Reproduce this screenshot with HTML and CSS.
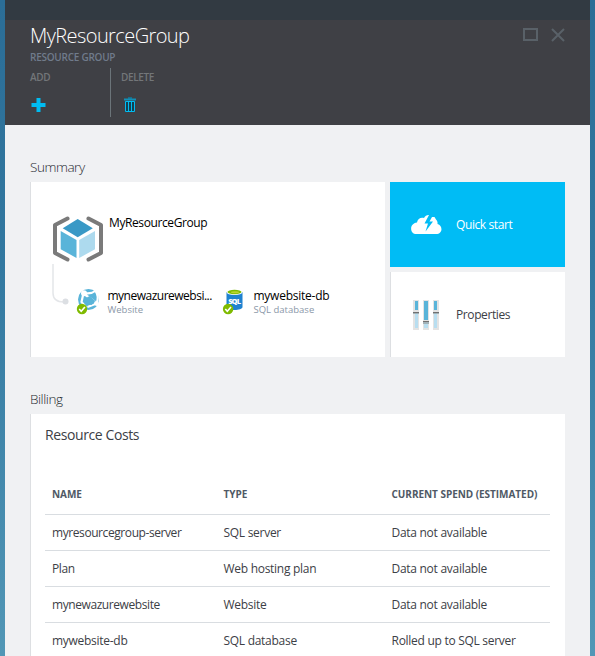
FILE: index.html
```html
<!DOCTYPE html>
<html lang="en">
<head>
<meta charset="utf-8">
<title>MyResourceGroup</title>
<link rel="stylesheet" href="styles.css">
</head>
<body>
<main class="blade">
  <header class="header">
    <div class="title-row">
      <h1>MyResourceGroup</h1>
      <svg class="window-controls" width="44" height="16" viewBox="0 0 44 16" fill="none" stroke="#596168" stroke-width="2"><path d="M2 2h13v11H2z"/><path d="M30 2l12 12M42 2L30 14"/></svg>
    </div>
    <div class="subtitle"><span>RESOURCE GROUP</span></div>
    <div class="commands">
      <div class="command add"><span>ADD</span>
        <svg width="16" height="16" viewBox="0 0 16 16"><path d="M6.500 1h4v5h5v4h-5v5h-4v-5h-5V6h5z" fill="#00bcf2"/></svg>
      </div>
      <div class="command delete"><span>DELETE</span>
        <svg width="16" height="16" viewBox="0 0 16 16"><path d="M7 0h4v2H7z" fill="#156f8d"/><path d="M3 1.500h12v2H3z" fill="#1290b6"/><path d="M4.500 4.500h9v10h-9z" fill="#12404f" stroke="#00bcf2"/><path d="M7.500 5v9M10.500 5v9" stroke="#00bcf2"/></svg>
      </div>
    </div>
  </header>
  <section class="content">
    <h2>Summary</h2>
    <div class="summary">
      <div class="tile group">
        <div class="group-head">
          <svg width="52" height="48" viewBox="52 215 52 48">
            <path d="M67.500 218.500L55 225v28l12.500 6.500M88.500 218.500L101 225v28l-12.500 6.500" fill="none" stroke="#7a7a7a" stroke-width="4" stroke-linecap="round" stroke-linejoin="round"/>
            <path d="M77.700 219l15.100 9.300-15.100 9-15-9z" fill="#3999c6"/><path d="M60.700 231l15.800 9v18l-15.800-8.800z" fill="#59b4d9"/><path d="M79.200 240l15.800-9v18.200L79.200 258z" fill="#addaee"/>
          </svg>
          <span>MyResourceGroup</span>
        </div>
        <div class="resources">
          <svg class="link" width="18" height="42" viewBox="0 0 18 42"><path d="M2 0v29q0 9 11 9" fill="none" stroke="#e4e6e9" stroke-width="1.500"/><circle cx="14.500" cy="37.500" r="3" fill="#dcdfe3"/></svg>
          <div class="resource site">
            <svg width="26" height="28" viewBox="76 288 26 28">
              <circle cx="88.500" cy="299.500" r="10.500" fill="#59b4d9"/>
              <path d="M83.500 293.500l13 9.500M83.500 293l-2 9 5 6M96.500 303.500l-9 3.500M84 293q7 1.500 12-2.500M96.500 303q3-6-1-12" stroke="#fff" fill="none" stroke-width="2.200"/>
              <path d="M84.500 299l5-3 6.500 5.500-4.500 3.500-6-1z" fill="#59b4d9"/>
              <circle cx="84" cy="293.200" r="3" fill="#fff"/><circle cx="96.500" cy="303.500" r="2.400" fill="#fff"/>
              <circle cx="82" cy="309" r="5.200" fill="#7fba00"/><path d="M79.200 309l2 2.200 3.700-4.200" fill="none" stroke="#fff" stroke-width="1.600"/>
            </svg>
            <div><b>mynewazurewebsi...</b><small>Website</small></div>
          </div>
          <div class="resource database">
            <svg width="26" height="28" viewBox="222 288 26 28">
              <path d="M226.500 292v15c0 4 16 4 16 0v-15z" fill="#1f82d0"/><ellipse cx="234.500" cy="292.200" rx="8" ry="2.800" fill="#fff"/><ellipse cx="234.500" cy="292" rx="7" ry="2.200" fill="#7fba00"/><ellipse cx="235" cy="292.200" rx="4" ry="1" fill="#b8d432"/>
              <text class="sql" x="228.200" y="304" textLength="12.800">SQL</text>
              <circle cx="228.100" cy="309" r="5.200" fill="#7fba00"/><path d="M225.300 309l2 2.200 3.700-4.200" fill="none" stroke="#fff" stroke-width="1.600"/>
            </svg>
            <div><b>mywebsite-db</b><small>SQL database</small></div>
          </div>
        </div>
      </div>
      <div class="shortcuts">
        <div class="tile action quick">
          <svg width="32" height="32" viewBox="410 208 32 32"><path d="M416.500 233c-7 0-7.500-10.500.5-11.500.5-4 4-5.500 7-4.500 1-2 3-3.200 5-3l-4.500 8.500h3.500l-2.500 8 7.500-10h-3.500l2.500-4.500h2.500l1.500 2.500c2 2 1.500 4 1.500 4.500 5.500 1.500 5.500 10-1.500 10z" fill="#fff"/></svg>
          <span>Quick start</span>
        </div>
        <div class="tile action">
          <svg width="32" height="32" viewBox="410 299 32 32"><path d="M413 300h6v30h-6zM423 300h6v30h-6zM433 300h6v30h-6z" fill="#e3e3e3"/><path d="M415 313h3v15h-3zM424 323h4v5h-4zM434 313h3v15h-3z" fill="#b8def0"/><path d="M415 301h3v9h-3zM424 301h4v19h-4zM434 301h3v9h-3z" fill="#59b4d9"/><path d="M413 313h6v1h-6zM423 322h6v2h-6zM433 313h6v1h-6z" fill="#a2b2b8"/><path d="M413 312h6v1h-6zM423 321h6v1h-6zM433 312h6v1h-6z" fill="#707070"/></svg>
          <span>Properties</span>
        </div>
      </div>
    </div>
    <h2 class="billing-title">Billing</h2>
    <div class="tile billing">
      <h3>Resource Costs</h3>
      <div class="table">
        <div class="row head"><span>NAME</span><span>TYPE</span><span>CURRENT SPEND (ESTIMATED)</span></div>
        <div class="row"><span class="name">myresourcegroup-server</span><span>SQL server</span><span>Data not available</span></div>
        <div class="row"><span class="name">Plan</span><span>Web hosting plan</span><span>Data not available</span></div>
        <div class="row"><span class="name">mynewazurewebsite</span><span>Website</span><span>Data not available</span></div>
        <div class="row"><span>mywebsite-db</span><span>SQL database</span><span>Rolled up to SQL server</span></div>
      </div>
    </div>
  </section>
</main>
</body>
</html>
```
FILE: styles.css
```css
* { box-sizing: border-box; }
body { margin: 0; height: 656px; overflow: hidden; padding: 0 5px; background: linear-gradient(#2b6d96, #3278a0 40%, #5297b6); font-family: "Open Sans", sans-serif; font-size: 12px; color: #3c4046; }
h1, h2, h3 { margin: 0; font-weight: 400; }
svg { display: block; flex: none; }
.blade { height: 656px; overflow: hidden; background: #f0f1f3; }
.header { height: 125px; padding: 0 24px 0 25px; background: #3f4045; border-top: 20px solid #323a42; }
.title-row { display: flex; justify-content: space-between; height: 30px; }
h1 { font-size: 20px; font-weight: 300; line-height: 31px; color: #fff; letter-spacing: -0.58px; }
.window-controls { margin-top: 7px; }
.subtitle { height: 13px; line-height: 14px; font-size: 10px; font-weight: 600; color: #707b8b; letter-spacing: -0.25px; }
.commands { display: flex; height: 49px; margin-top: 5px; }
.command { font-size: 10px; font-weight: 600; line-height: 18px; color: #737679; letter-spacing: -0.35px; }
.command svg { margin-top: 11px; }
.add { width: 81px; border-right: 1px solid #6b7479; }
.delete { padding-left: 10px; }
.content { padding: 31px 25px 0; }
h2 { height: 26px; font-size: 13.5px; font-weight: 300; line-height: 23px; color: #25292e; letter-spacing: -0.45px; }
.tile { background: #fff; border-left: 1px solid #dddfe2; }
.summary { display: flex; gap: 5px; height: 175px; }
.group { width: 355px; padding-top: 33px; }
.group-head { display: flex; gap: 5px; padding-left: 21px; height: 49px; color: #000; line-height: 15px; letter-spacing: -0.4px; }
.resources { display: flex; padding-left: 20px; }
.resource { display: flex; padding-top: 24px; }
.resource div { padding-left: 5.5px; }
.resource b { display: block; height: 14px; line-height: 15px; font-weight: 400; color: #000; white-space: nowrap; letter-spacing: -0.25px; }
.site b { letter-spacing: -0.5px; }
.resource small { display: block; font-size: 9.5px; line-height: 16px; color: #8b98a8; white-space: nowrap; }
.site { width: 146px; margin-left: 7px; }
.sql { font-family: "Open Sans", sans-serif; font-size: 7.5px; font-weight: 800; fill: #fff; }
.shortcuts { display: grid; grid-template-rows: 85px 85px; gap: 5px; width: 175px; }
.action { display: flex; align-items: center; padding-left: 19px; gap: 14px; letter-spacing: -0.4px; }
.quick { background: #00bcf5; border-color: #00bcf5; color: #fff; }
.billing-title { margin-top: 31px; }
.billing { height: 260px; padding: 0 15px 0 14px; }
h3 { height: 61px; line-height: 41px; font-size: 14px; letter-spacing: -0.4px; }
.row { display: grid; grid-template-columns: 171.5px 168px 1fr; height: 36px; line-height: 36px; padding-left: 7px; border-bottom: 1px solid #d9dde1; letter-spacing: -0.28px; }
.name { letter-spacing: -0.42px; }
.head { height: 40px; line-height: 39px; font-size: 10px; font-weight: 700; color: #4f5965; letter-spacing: -0.04px; }
.row span { white-space: nowrap; }
```
